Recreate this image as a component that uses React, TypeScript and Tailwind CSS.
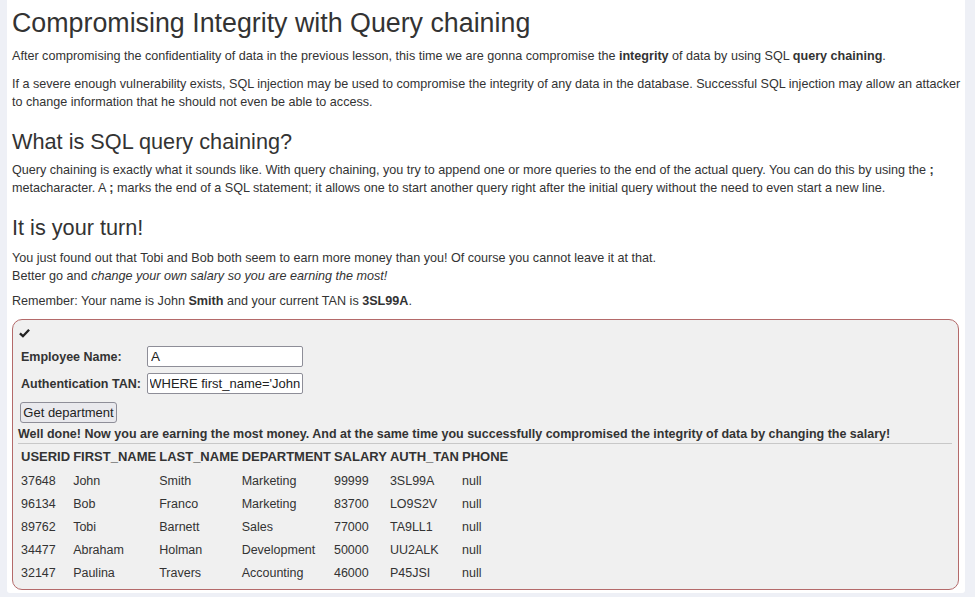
import React, { useEffect, useRef } from "react";

const rows = [
  ["37648", "John", "Smith", "Marketing", "99999", "3SL99A", "null"],
  ["96134", "Bob", "Franco", "Marketing", "83700", "LO9S2V", "null"],
  ["89762", "Tobi", "Barnett", "Sales", "77000", "TA9LL1", "null"],
  ["34477", "Abraham", "Holman", "Development", "50000", "UU2ALK", "null"],
  ["32147", "Paulina", "Travers", "Accounting", "46000", "P45JSI", "null"],
];
const heads = ["USERID", "FIRST_NAME", "LAST_NAME", "DEPARTMENT", "SALARY", "AUTH_TAN", "PHONE"];

export default function App() {
  const tanRef = useRef<HTMLInputElement>(null);
  useEffect(() => {
    const el = tanRef.current;
    if (el) el.scrollLeft = el.scrollWidth;
  }, []);
  return (
    <div className="w-[975px] h-[597px] bg-[#eef0f6] overflow-hidden" style={{ fontFamily: '"Liberation Sans", Arial, sans-serif' }}>
      <div className="ml-[7px] w-[958px] h-[593px] bg-white rounded-b-[3px] pl-[5px] text-[#333] text-[12.6px] leading-[18px]">
        <h1 className="text-[26.8px] leading-[32px] pt-[7px] mb-[8px]">Compromising Integrity with Query chaining</h1>
        <p className="mb-[10px]">After compromising the confidentiality of data in the previous lesson, this time we are gonna compromise the <b>integrity</b> of data by using SQL <b>query chaining</b>.</p>
        <p>If a severe enough vulnerability exists, SQL injection may be used to compromise the integrity of any data in the database. Successful SQL injection may allow an attacker to change information that he should not even be able to access.</p>
        <h2 className="text-[21.7px] leading-[26px] mt-[18px] mb-[6px]">What is SQL query chaining?</h2>
        <p className="pr-[6px]">Query chaining is exactly what it sounds like. With query chaining, you try to append one or more queries to the end of the actual query. You can do this by using the <b>;</b> metacharacter. A <b>;</b> marks the end of a SQL statement; it allows one to start another query right after the initial query without the need to even start a new line.</p>
        <h2 className="text-[21.7px] leading-[26px] mt-[18px] mb-[8px]">It is your turn!</h2>
        <p className="mb-[7px]">You just found out that Tobi and Bob both seem to earn more money than you! Of course you cannot leave it at that.<br />Better go and <i>change your own salary so you are earning the most!</i></p>
        <p className="mb-[9px]">Remember: Your name is John <b>Smith</b> and your current TAN is <b>3SL99A</b>.</p>
        <div className="h-[271px] mr-[6px] border border-[#b46a6a] rounded-[10px] bg-[#f0f0f0] px-[5px] pt-[6px] text-[12.5px]">
          <div className="pl-[1px] h-[15px]">
            <svg width="11" height="10" viewBox="0 0 12 10" className="mt-[2px]"><path d="M1 5.5 L4.3 8.5 L11 1.5" stroke="#222" strokeWidth="2.6" fill="none" /></svg>
          </div>
          <div className="flex items-center h-[27px] pl-[3px]">
            <span className="w-[126px] shrink-0 whitespace-nowrap font-bold">Employee Name:</span>
            <input readOnly value="A" className="w-[156px] h-[21px] bg-white border border-[#8e8e98] rounded-[2px] px-[3px] text-[13.5px] text-[#222] outline-none" style={{ fontFamily: '"Liberation Sans", Arial, sans-serif' }} />
          </div>
          <div className="flex items-center h-[27px] pl-[3px]">
            <span className="w-[126px] shrink-0 whitespace-nowrap font-bold">Authentication TAN:</span>
            <input ref={tanRef} readOnly value={"'; UPDATE employees SET salary=99999 WHERE first_name='John"} className="w-[156px] h-[21px] bg-white border border-[#8e8e98] rounded-[2px] px-[2px] text-[13px] text-[#222] outline-none" style={{ fontFamily: '"Liberation Sans", Arial, sans-serif' }} />
          </div>
          <div className="pl-[2px] mt-[5px]">
            <button className="h-[21px] w-[97px] border border-[#8e8e98] rounded-[3px] bg-[#e9e9ed] text-[13px] text-[#222] leading-[19px]">Get department</button>
          </div>
          <div className="font-bold leading-[17px] mt-[3px] border-b border-[#c8c8c8] mr-[1px]">Well done! Now you are earning the most money. And at the same time you successfully compromised the integrity of data by changing the salary!</div>
          <table className="mt-[1px] ml-[1px] border-separate border-spacing-x-[1px]">
            <thead>
              <tr className="h-[24px]">
                {heads.map((h) => (
                  <th key={h} className="text-left font-bold text-[13px] px-[1px]">{h}</th>
                ))}
              </tr>
            </thead>
            <tbody>
              {rows.map((r) => (
                <tr key={r[0]} className="h-[23px]">
                  {r.map((c, i) => (
                    <td key={i} className="text-[12.5px] px-[1px]">{c}</td>
                  ))}
                </tr>
              ))}
            </tbody>
          </table>
        </div>
      </div>
    </div>
  );
}
